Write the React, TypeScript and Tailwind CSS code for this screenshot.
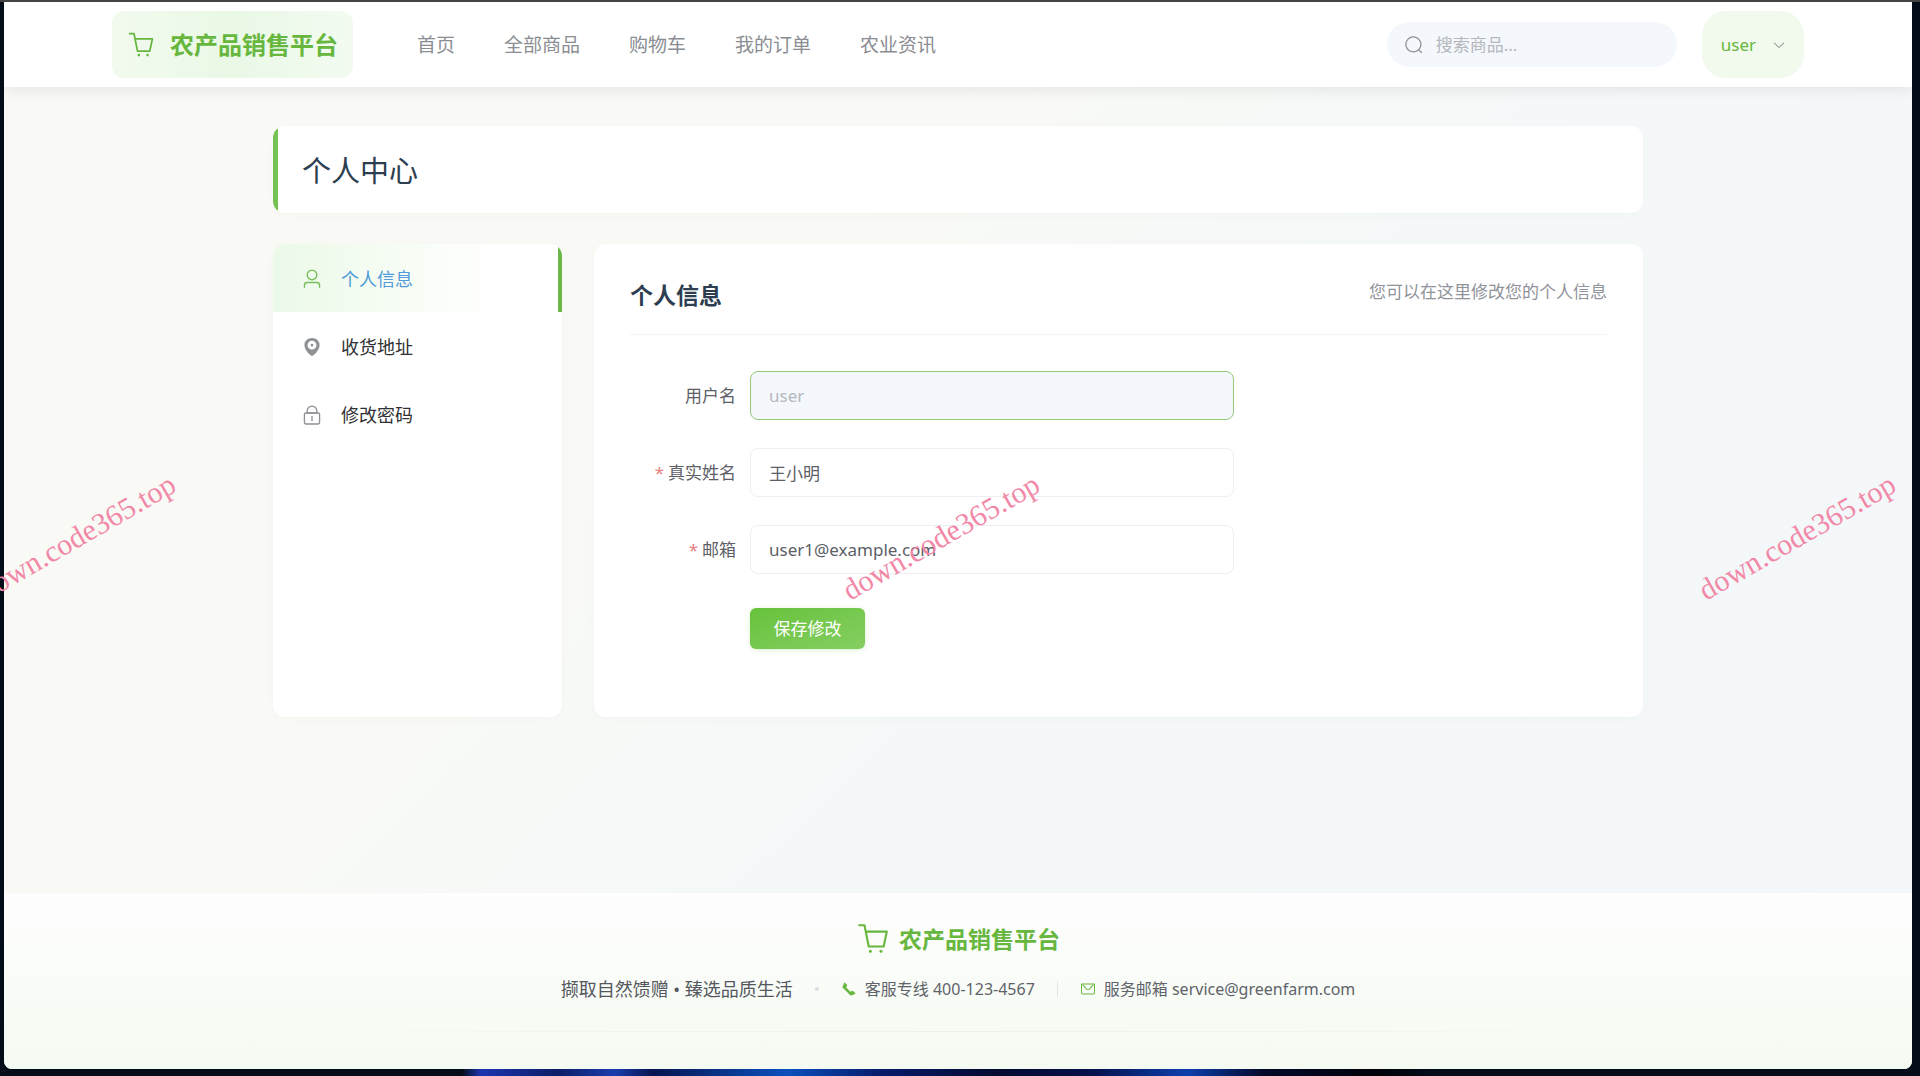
import { useState } from "react"
import clsx from "clsx"

const icons = {
  cart: [
    "M432 928a48 48 0 1 1 0-96 48 48 0 0 1 0 96m320 0a48 48 0 1 1 0-96 48 48 0 0 1 0 96M96 128a32 32 0 0 1 0-64h160a32 32 0 0 1 31.36 25.728L320.64 256H928a32 32 0 0 1 31.296 38.72l-96 448A32 32 0 0 1 832 768H384a32 32 0 0 1-31.36-25.728L229.76 128zm314.24 576h395.904l82.304-384H333.44z",
  ],
  search: [
    "m795.904 750.72 124.992 124.928a32 32 0 0 1-45.248 45.248L750.656 795.904a416 416 0 1 1 45.248-45.248zM480 832a352 352 0 1 0 0-704 352 352 0 0 0 0 704",
  ],
  arrowDown: [
    "M831.872 340.864 512 652.672 192.128 340.864a30.592 30.592 0 0 0-42.752 0 29.12 29.12 0 0 0 0 41.6L489.664 714.24a32 32 0 0 0 44.672 0l340.288-331.712a29.12 29.12 0 0 0 0-41.728 30.592 30.592 0 0 0-42.752 0z",
  ],
  user: [
    "M512 512a192 192 0 1 0 0-384 192 192 0 0 0 0 384m0 64a256 256 0 1 1 0-512 256 256 0 0 1 0 512m320 320v-96a96 96 0 0 0-96-96H288a96 96 0 0 0-96 96v96a32 32 0 1 1-64 0v-96a160 160 0 0 1 160-160h448a160 160 0 0 1 160 160v96a32 32 0 1 1-64 0",
  ],
  location: [
    "M512 928c23.936 0 117.504-68.352 192.064-153.152C803.456 661.888 864 535.808 864 416c0-189.632-155.84-320-352-320S160 226.368 160 416c0 120.32 60.544 246.4 159.936 359.232C394.432 859.84 488 928 512 928m0-435.2a64 64 0 1 0 0-128 64 64 0 0 0 0 128m0 140.8a204.8 204.8 0 1 1 0-409.6 204.8 204.8 0 0 1 0 409.6",
  ],
  lock: [
    "M224 448a32 32 0 0 0-32 32v384a32 32 0 0 0 32 32h576a32 32 0 0 0 32-32V480a32 32 0 0 0-32-32zm0-64h576a96 96 0 0 1 96 96v384a96 96 0 0 1-96 96H224a96 96 0 0 1-96-96V480a96 96 0 0 1 96-96",
    "M512 544a32 32 0 0 1 32 32v192a32 32 0 1 1-64 0V576a32 32 0 0 1 32-32m192-160v-64a192 192 0 1 0-384 0v64zM512 64a256 256 0 0 1 256 256v128H256V320A256 256 0 0 1 512 64",
  ],
  phone: [
    "M199.232 125.568 90.624 379.008a32 32 0 0 0 6.784 35.2l512.384 512.384a32 32 0 0 0 35.2 6.784l253.44-108.608a32 32 0 0 0 10.048-52.032L769.6 633.92a32 32 0 0 0-36.928-5.952l-130.176 65.088-271.488-271.552 65.024-130.176a32 32 0 0 0-5.952-36.928L251.2 115.52a32 32 0 0 0-51.968 10.048",
  ],
  message: [
    "M128 224v512a64 64 0 0 0 64 64h640a64 64 0 0 0 64-64V224zm0-64h768a64 64 0 0 1 64 64v512a128 128 0 0 1-128 128H192A128 128 0 0 1 64 736V224a64 64 0 0 1 64-64",
    "M904 224 656.512 506.88a192 192 0 0 1-289.024 0L120 224zm-698.944 0 210.56 240.704a128 128 0 0 0 192.704 0L818.944 224z",
  ],
}

type IconName = keyof typeof icons

function Icon({ name, className }: { name: IconName; className?: string }) {
  return (
    <svg viewBox="0 0 1024 1024" fill="currentColor" aria-hidden="true" className={clsx("shrink-0", className)}>
      {icons[name].map((d) => (
        <path key={d} d={d} />
      ))}
    </svg>
  )
}

const navItems = ["首页", "全部商品", "购物车", "我的订单", "农业资讯"]

const menuItems: { icon: IconName; label: string }[] = [
  { icon: "user", label: "个人信息" },
  { icon: "location", label: "收货地址" },
  { icon: "lock", label: "修改密码" },
]

function Header() {
  return (
    <header className="relative bg-white shadow-[0_2px_14px_rgba(0,0,0,0.09)]">
      <div className="max-w-[1692px] mx-auto h-[85px] flex items-center">
        <a
          href="#"
          className="flex items-center gap-[15px] h-[67px] px-[15px] rounded-xl bg-linear-to-r from-[#f2faee] via-[#e9f9e6] to-[#f3fbf1] text-[#67b73e]"
        >
          <Icon name="cart" className="size-7" />
          <span className="text-2xl font-bold whitespace-nowrap">农产品销售平台</span>
        </a>

        <nav className="flex gap-[49px] ml-16 pt-0.5 text-[19px] text-[#8a8d92] whitespace-nowrap">
          {navItems.map((item) => (
            <a key={item} href="#">
              {item}
            </a>
          ))}
        </nav>

        <label className="ml-auto flex items-center gap-3 w-[290px] h-[45px] px-[17px] rounded-full bg-[#f4f7fb]">
          <Icon name="search" className="size-5 text-[#8f9399]" />
          <input
            type="text"
            aria-label="搜索商品"
            placeholder="搜索商品..."
            className="flex-1 min-w-0 bg-transparent text-[17px] outline-none placeholder:text-[#b4b7be]"
          />
        </label>

        <button className="ml-[25px] flex items-center gap-4 h-[67px] pl-[19px] pr-[18px] rounded-3xl bg-[#f1faed] text-[17px] text-[#67b73e]">
          user
          <Icon name="arrowDown" className="size-[14px] text-[#7b8078]" />
        </button>
      </div>
    </header>
  )
}

function Sidebar() {
  const [active, setActive] = useState("个人信息")

  return (
    <aside className="bg-white rounded-xl overflow-hidden shadow-[0_2px_12px_rgba(0,0,0,0.02)]">
      {menuItems.map(({ icon, label }) => (
        <button
          key={label}
          onClick={() => setActive(label)}
          className={clsx(
            "flex items-center gap-[18px] w-full h-[68px] pl-7 pt-0.5 text-lg border-r-4",
            active === label
              ? "bg-linear-to-r from-[#ebf9e8] via-[#f8fdf6] via-50% to-white to-80% border-[#6bb84a] text-[#529bd9]"
              : "border-transparent text-[#303133]"
          )}
        >
          <Icon name={icon} className={clsx("size-[22px]", active === label ? "text-[#78bf5a]" : "text-[#8f9297]")} />
          {label}
        </button>
      ))}
    </aside>
  )
}

interface FieldProps {
  id: string
  label: string
  value: string
  onChange?: (value: string) => void
  required?: boolean
  disabled?: boolean
}

function Field({ id, label, value, onChange, required, disabled }: FieldProps) {
  return (
    <div className="flex items-center">
      <label htmlFor={id} className="w-[106px] mr-[14px] text-right text-[17px] text-[#5d6066] whitespace-nowrap">
        {required && <span className="mr-1 text-[#e58080]">*</span>}
        {label}
      </label>
      <input
        id={id}
        type="text"
        value={value}
        disabled={disabled}
        onChange={(e) => onChange?.(e.target.value)}
        className={clsx(
          "w-[484px] h-[49px] px-[18px] rounded-lg border text-[17px] outline-none",
          disabled ? "bg-[#f4f7fb] border-[#92c97c] text-[#b4b8bf]" : "bg-white border-[#eceef1] text-[#5d6066]"
        )}
      />
    </div>
  )
}

function ProfilePanel() {
  const [name, setName] = useState("王小明")
  const [email, setEmail] = useState("user1@example.com")

  return (
    <section className="bg-white rounded-xl px-9 pt-8 shadow-[0_2px_12px_rgba(0,0,0,0.02)]">
      <div className="flex justify-between h-[59px] border-b border-[#f3f4f5]">
        <h2 className="text-[23px] leading-[38px] font-bold text-[#2c3e50]">个人信息</h2>
        <p className="text-[17px] leading-8 text-[#909399]">您可以在这里修改您的个人信息</p>
      </div>

      <form className="pt-9 flex flex-col gap-7" onSubmit={(e) => e.preventDefault()}>
        <Field id="username" label="用户名" value="user" disabled />
        <Field id="realName" label="真实姓名" value={name} onChange={setName} required />
        <Field id="email" label="邮箱" value={email} onChange={setEmail} required />
        <div className="pl-[120px] pt-1.5">
          <button
            type="submit"
            className="h-[41px] w-[115px] rounded-md bg-linear-to-br from-[#67c23a] to-[#85ce61] text-[17px] text-white shadow-[0_1px_4px_rgba(103,194,58,0.25)]"
          >
            保存修改
          </button>
        </div>
      </form>
    </section>
  )
}

function Footer() {
  return (
    <footer className="bg-linear-to-b from-[#fefefe] to-[#f4faf1] pt-[29px]">
      <div className="flex items-center justify-center gap-[9px] text-[#67b73e]">
        <Icon name="cart" className="size-[34px]" />
        <span className="text-[23px] leading-[34px] font-bold">农产品销售平台</span>
      </div>

      <div className="mt-[21px] flex items-center justify-center h-6 text-base leading-6 text-[#5f636a] whitespace-nowrap">
        <span className="text-lg text-[#54585e]">撷取自然馈赠 • 臻选品质生活</span>
        <span className="mx-[22px] size-1 rounded-full bg-[#dcdfe6]" />
        <span className="flex items-center gap-2">
          <Icon name="phone" className="size-4 text-[#67b73e]" />
          客服专线 400-123-4567
        </span>
        <span className="mx-[22px] w-px h-4 bg-[#e2e5e8]" />
        <span className="flex items-center gap-2">
          <Icon name="message" className="size-4 text-[#67b73e]" />
          服务邮箱 service@greenfarm.com
        </span>
      </div>

      <div className="mt-[30px] mb-[37px] mx-auto max-w-[1445px] h-px bg-linear-to-r from-transparent via-[#ebf1e9] to-transparent" />
    </footer>
  )
}

function Watermark({ className }: { className: string }) {
  return (
    <span
      className={clsx(
        "absolute top-[535px] -translate-x-1/2 -translate-y-1/2 -rotate-30 whitespace-nowrap font-['Liberation_Serif',serif] text-[30px] leading-none text-[#f288a8] pointer-events-none",
        className
      )}
    >
      down.code365.top
    </span>
  )
}

export default function App() {
  return (
    <div className="relative min-h-screen flex flex-col overflow-hidden border-t-2 border-[#444444] bg-[#030d1a] pl-1 pr-2 font-['Noto_Sans','Noto_Sans_CJK_SC',sans-serif]">
      <div className="flex-1 flex flex-col rounded-b-lg overflow-hidden bg-linear-135 from-[#f9faf5] from-35% via-[#f4f8f8] via-55% to-[#f4f7fa]">
        <Header />
        <main className="flex-1 w-full max-w-[1370px] mx-auto pt-[39px] pb-10">
          <div className="h-[87px] flex items-center rounded-xl overflow-hidden bg-white shadow-[0_2px_12px_rgba(0,0,0,0.02)]">
            <div className="w-[5px] h-full bg-[#74c254]" />
            <h1 className="pl-6 pt-[3px] text-[29px] text-[#2c3e50]">个人中心</h1>
          </div>
          <div className="mt-[31px] grid grid-cols-[289px_1fr] gap-8 min-h-[473px]">
            <Sidebar />
            <ProfilePanel />
          </div>
        </main>
        <Footer />
      </div>

      {/* Desktop wallpaper showing under the window */}
      <div className="h-[7px] bg-[linear-gradient(90deg,#030d1a_24%,#1c35b0_25%,#0c1c66_29%,#1a3cae_32%,#061550_34%,#0b50bd_41%,#061a6a_46%,#020a30_52%,#04104a_57%,#0e3fae_62%,#03082a_66%,#000208_72%,#030d1a_75%)]" />

      <Watermark className="left-[4%]" />
      <Watermark className="left-[49%]" />
      <Watermark className="left-[93.6%]" />
    </div>
  )
}
